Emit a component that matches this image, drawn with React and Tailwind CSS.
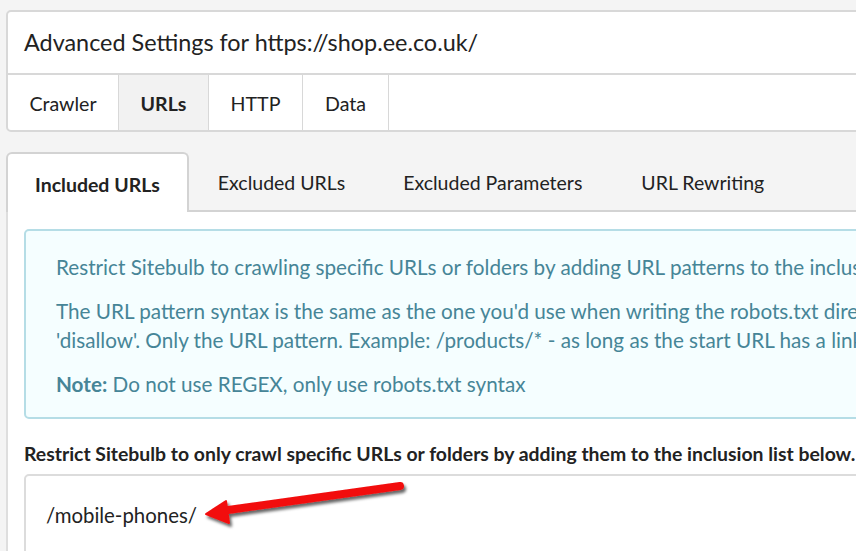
import React from "react";

function Arrow() {
  return (
    <svg
      className="absolute left-[195px] top-[474px]"
      width="225"
      height="62"
      viewBox="0 0 225 62"
    >
      <defs>
        <filter id="sh" x="-20%" y="-50%" width="140%" height="200%">
          <feDropShadow dx="2" dy="3" stdDeviation="1.6" floodColor="#000" floodOpacity="0.6" />
        </filter>
      </defs>
      <g filter="url(#sh)">
        <line x1="26" y1="37" x2="205" y2="12" stroke="#f20d0d" strokeWidth="8" strokeLinecap="round" />
        <polygon points="11,40 31,27 34,49" fill="#f20d0d" stroke="#f20d0d" strokeWidth="2" strokeLinejoin="round" />
      </g>
    </svg>
  );
}

export default function App() {
  const font = { fontFamily: "Lato, 'Noto Sans', sans-serif" };
  return (
    <div
      className="relative w-[856px] h-[551px] overflow-hidden bg-[#f4f4f4] text-[#222]"
      style={font}
    >
      <div className="w-[1100px] pt-[10px] pl-[6px]">
        {/* Top card */}
        <div className="bg-white border-2 border-[#d8d8d8] rounded-[5px] overflow-hidden">
          <div className="h-[63px] flex items-center pl-[16px] text-[23.4px] text-[#222] border-b-2 border-[#d8d8d8]">
            Advanced Settings for https://shop.ee.co.uk/
          </div>
          <div className="flex h-[55px] text-[19.6px]">
            <div className="w-[111px] flex items-center justify-center pt-[2px] border-r border-[#d8d8d8]">Crawler</div>
            <div className="w-[90px] flex items-center justify-center pt-[2px] border-r border-[#d8d8d8] bg-[#f2f2f2] font-bold">URLs</div>
            <div className="w-[94px] flex items-center justify-center pt-[2px] border-r border-[#d8d8d8]">HTTP</div>
            <div className="w-[86px] flex items-center justify-center pt-[2px] border-r border-[#d8d8d8]">Data</div>
          </div>
        </div>

        {/* Sub tabs */}
        <div className="mt-[20px] flex items-end h-[60px] border-b-2 border-[#d3d3d3] text-[19.5px]">
          <div className="h-[60px] -mb-[2px] px-[27px] pt-[3px] flex items-center bg-white border-2 border-b-0 border-[#d3d3d3] rounded-t-[6px] font-bold">
            Included URLs
          </div>
          <div className="h-full px-[29px] pt-[3px] flex items-center">Excluded URLs</div>
          <div className="h-full px-[29px] pt-[3px] flex items-center">Excluded Parameters</div>
          <div className="h-full px-[30px] pt-[3px] flex items-center">URL Rewriting</div>
        </div>

        {/* Panel */}
        <div className="bg-white border-l-2 border-[#dedede] pl-[16px] pt-[17px] h-[400px]">
          <div className="bg-[#f5feff] border-2 border-[#b5dde6] rounded-[5px] pl-[30px] pt-[22px] pb-[18px] text-[20.7px] leading-[29px] text-[#468597]">
            <p className="whitespace-nowrap">
              Restrict Sitebulb to crawling specific URLs or folders by adding URL patterns to the inclusion list below.
            </p>
            <p className="mt-[15px] whitespace-nowrap">
              The URL pattern syntax is the same as the one you'd use when writing the robots.txt directives, but without the 'allow' or
            </p>
            <p className="whitespace-nowrap">
              'disallow'. Only the URL pattern. Example: /products/* - as long as the start URL has a link to a page in this folder.
            </p>
            <p className="mt-[15px] whitespace-nowrap">
              <span className="font-bold">Note:</span> Do not use REGEX, only use robots.txt syntax
            </p>
          </div>

          <div className="mt-[22px] text-[19.4px] font-bold whitespace-nowrap leading-[26px]">
            Restrict Sitebulb to only crawl specific URLs or folders by adding them to the inclusion list below.
          </div>
          <div className="mt-[7px] h-[200px] border-2 border-[#dcdcdc] rounded-[5px] pl-[20px] pt-[24px] text-[20.4px] text-[#222]">
            /mobile-phones/
          </div>
        </div>
      </div>
      <Arrow />
    </div>
  );
}
